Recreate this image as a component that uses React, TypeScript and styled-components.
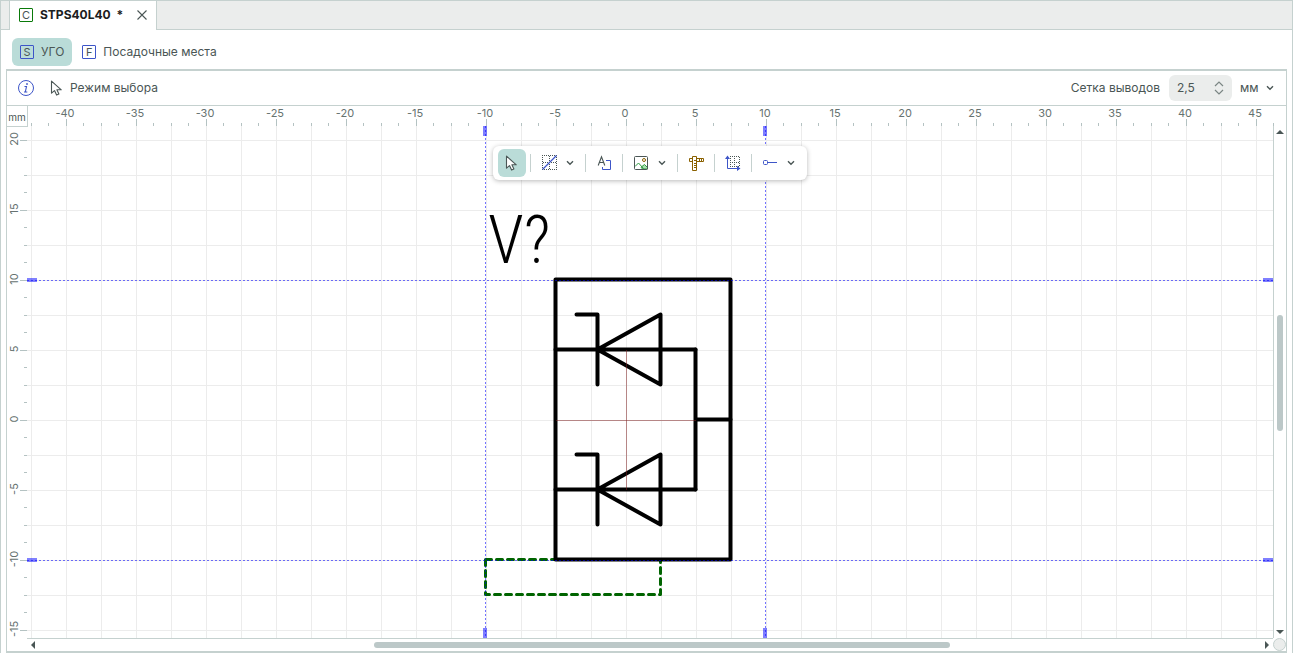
import React, { useLayoutEffect, useRef, useState } from "react";
import styled, { createGlobalStyle, css } from "styled-components";

const line = "#c5d1cf";
const tick = "#b4c2c2";
const ink = "#4a5655";
const teal = "#badcd8";
const blue = "#3d55c8";
const brown = "#8a6100";

const GlobalStyle = createGlobalStyle`
  * { box-sizing: border-box; }
  html, body, #root { height: 100%; }
  body {
    margin: 0;
    background: #fff;
    color: ${ink};
    font: 12px/16px Inter, "Noto Sans", sans-serif;
  }
  button, input, select { font: inherit; color: inherit; }
`;

const Window = styled.main`
  display: flex;
  flex-direction: column;
  height: 100%;
  border: 1px solid ${line};
  border-bottom: 0;
  overflow: hidden;
`;

const TabBar = styled.header`
  display: flex;
  flex: none;
  height: 29px;
  padding-left: 8px;
  background: #ebedec;
  box-shadow: inset 0 -1px ${line};
`;

const DocTab = styled.div`
  display: flex;
  align-items: center;
  gap: 7px;
  padding: 0 8px 2px 9px;
  background: #fff;
  border: solid ${line};
  border-width: 0 1px;
`;

const DocTitle = styled.strong`
  font-weight: 700;
  color: #1b2020;
  white-space: pre;
`;

const BareButton = styled.button`
  display: flex;
  align-items: center;
  justify-content: center;
  padding: 0;
  border: 0;
  background: none;
`;

const CloseButton = styled(BareButton)`
  padding-left: 6px;
`;

const ViewBar = styled.nav`
  display: flex;
  flex: none;
  align-items: center;
  gap: 2px;
  height: 39px;
  padding: 4px 11px 0;
`;

const ViewButton = styled(BareButton)<{ $active?: boolean }>`
  gap: 7px;
  height: 28px;
  padding: 0 8px;
  border-radius: 6px;
  background: ${(p) => (p.$active ? teal : "transparent")};
`;

const Panel = styled.section`
  display: flex;
  flex: 1;
  flex-direction: column;
  min-height: 0;
  margin: 0 5px;
  border: solid ${line};
  border-width: 2px 1px;
`;

const ModeBar = styled.div`
  display: flex;
  flex: none;
  align-items: center;
  height: 35px;
  padding: 0 12px 0 10px;
  border-bottom: 1px solid ${line};
`;

const ModeLabel = styled.span`
  display: flex;
  flex: 1;
  align-items: center;
  gap: 5px;
  margin-left: 14px;
`;

const Stepper = styled.div`
  display: flex;
  align-items: center;
  width: 63px;
  height: 26px;
  margin: 0 8px 0 9px;
  padding: 0 8px;
  border-radius: 6px;
  background: #ebedec;
`;

const StepperInput = styled.input`
  flex: 1;
  min-width: 0;
  padding: 0;
  border: 0;
  outline: 0;
  background: none;
`;

const StepperButtons = styled.div`
  display: flex;
  flex-direction: column;
  gap: 2px;
`;

const UnitField = styled.div`
  display: grid;
  align-items: center;
  width: 34px;

  & > * { grid-area: 1 / 1; }
  & > svg { justify-self: end; pointer-events: none; }
`;

const UnitSelect = styled.select`
  width: 100%;
  padding: 0;
  border: 0;
  outline: 0;
  background: none;
  appearance: none;
`;

const Workspace = styled.div`
  display: grid;
  flex: 1;
  grid-template: 20px minmax(0, 1fr) 13px / 20px minmax(0, 1fr) 13px;
  min-height: 0;
`;

const RulerCorner = styled.div`
  display: flex;
  align-items: center;
  justify-content: center;
  padding-top: 2px;
  box-shadow: 1px 0 ${line}, 0 1px ${line}, 1px 1px ${line};
  font-size: 10px;
  line-height: 12px;
  z-index: 1;
`;

const Drawing = styled.svg`
  display: block;
  width: 100%;
  height: 100%;
  overflow: hidden;
`;

const Ruler = styled.div<{ $wide?: boolean }>`
  min-width: 0;
  min-height: 0;
  overflow: hidden;
  ${(p) => p.$wide && css`grid-column: span 2;`}

  text {
    font-size: 11px;
    fill: #667270;
    text-anchor: middle;
  }
`;

const Sheet = styled.div`
  position: relative;
  min-width: 0;
  min-height: 0;
  overflow: hidden;
`;

const Designator = styled.text`
  font-family: "Roboto Condensed", "Open Sans Condensed", "Open Sans", sans-serif;
  font-size: 66px;
  font-weight: 300;
  fill: #000;
`;

const ToolPalette = styled.div`
  position: absolute;
  top: 20px;
  left: 466px;
  display: flex;
  align-items: center;
  height: 34px;
  padding: 0 5px;
  border-radius: 6px;
  background: #fff;
  box-shadow: 0 1px 5px rgba(0, 0, 0, 0.28);
`;

const Tool = styled(BareButton)<{ $active?: boolean; $menu?: boolean }>`
  gap: 8px;
  width: ${(p) => (p.$menu ? 46 : 28)}px;
  height: 28px;
  border-radius: 6px;
  background: ${(p) => (p.$active ? teal : "transparent")};
`;

const ToolDivider = styled.span`
  width: 1px;
  height: 18px;
  margin: 0 4px;
  background: ${line};
`;

const ScrollTrack = styled.div<{ $vertical?: boolean }>`
  display: flex;
  flex-direction: ${(p) => (p.$vertical ? "column" : "row")};
  align-items: center;
  min-width: 0;
  min-height: 0;
  padding: ${(p) => (p.$vertical ? "4px 0" : "0 4px")};
  border: 0 solid ${line};
  ${(p) => (p.$vertical ? "border-left-width: 1px" : "border-top-width: 1px; grid-column: 1 / 3; margin-left: 20px")};
`;

const ScrollSpace = styled.span<{ $grow: number }>`
  flex: ${(p) => p.$grow} 1 0;
`;

const ScrollThumb = styled.span<{ $grow: number; $vertical?: boolean }>`
  flex: ${(p) => p.$grow} 1 0;
  ${(p) => (p.$vertical ? "width: 6px" : "height: 6px")};
  border-radius: 3px;
  background: #bcc8c8;
`;

const ScrollCorner = styled.div`
  width: 13px;
  height: 13px;
  border: 1px solid ${line};
  border-radius: 50%;
  background: #ebedec;
`;

const LetterBox = styled.span<{ $color: string }>`
  display: flex;
  align-items: center;
  justify-content: center;
  width: 14px;
  height: 14px;
  border: 1px solid ${(p) => p.$color};
  border-radius: 1px;
  font-size: 11px;
  line-height: 12px;
`;

const Chevron = () => (
  <svg width="8" height="6" viewBox="0 0 8 6" fill="none" stroke={ink} strokeWidth="1.4">
    <path d="M1 1.2 4 4.2 7 1.2" />
  </svg>
);

const Arrow = ({ d, w, h }: { d: string; w: number; h: number }) => (
  <svg width={w} height={h} viewBox={`0 0 ${w} ${h}`} fill={ink}>
    <path d={d} />
  </svg>
);

const Pointer = () => (
  <svg width="16" height="16" viewBox="0 0 16 16" fill="#fff" stroke={ink} strokeWidth="1.1" strokeLinejoin="round">
    <path d="M2.500 1.200v12l3-2.600 2.100 4.500 2.300-1.100-2-4.200h4.400z" />
  </svg>
);

const ICON = { width: 16, height: 16, viewBox: "0 0 16 16", fill: "none" };

const LineIcon = () => (
  <svg {...ICON}>
    <path
      d="M0 .5h15M0 14.5h15M.5 2v12M14.5 2v12M1 7.5h14M7.5 1v14"
      stroke={ink}
      strokeDasharray="1 1"
    />
    <path d="M.5 14.500 14.500.500" stroke={blue} strokeWidth="1.300" />
  </svg>
);

const TextIcon = () => (
  <svg {...ICON}>
    <path d="M2.200 10.500 5.500 1.700 8.800 10.500M3.400 7.500h4.200" stroke={ink} strokeWidth="1.100" />
    <path d="M10 5.500h4.500v9h-8V12" stroke={blue} />
  </svg>
);

const PictureIcon = () => (
  <svg {...ICON}>
    <path d="M7 12.200 10.500 9.500 13.500 12.500V14H8.500z" fill="#a9dfb0" stroke="#2c9a3f" />
    <path d="M1 11.500 4.500 8 9.500 13.500" stroke="#2c9a3f" />
    <rect x=".5" y="1.500" width="13" height="13" rx="1" stroke={ink} />
    <circle cx="10" cy="5" r="1.500" stroke={brown} />
  </svg>
);

const MeasureIcon = () => (
  <svg {...ICON} stroke={brown}>
    <path d="M4.500 1.500h4v14h-4zM4.500 3.500h-3v3h3M8.500 3.500h7v3h-7" />
    <path d="M11.500 4v2M13.500 4v2M6 5.500h2M6 8.500h2M6 10.500h2M6 12.500h2" />
  </svg>
);

const OriginIcon = () => (
  <svg {...ICON}>
    <path
      d="M5 1.500h10M5 11.500h10M5 7.500h10M5.500 3v8M9.500 3v8M14.500 2v9"
      stroke={ink}
      strokeDasharray="1 1"
    />
    <path d="M2.500 3v10.500H13" stroke={blue} />
    <path d="M0 4 2.500.500 5 4zM12 11l3.500 2.500L12 16z" fill={blue} />
  </svg>
);

const PinIcon = () => (
  <svg {...ICON} stroke={blue}>
    <rect x=".5" y="5.500" width="4" height="4" rx="1" />
    <path d="M4.500 7.500H14" />
  </svg>
);

/* Sheet scale: 14 px per millimetre, zero point measured from the sheet's corner. */
const ORIGIN_X = 599;
const ORIGIN_Y = 294;
const PX_PER_MM = 14;
const TICK_STEP = 17.5;

/* Ticks that fit a ruler of the given length; every fourth one carries a label. */
function ticksFor(origin: number, length: number) {
  const ticks: { n: number; at: number; major: boolean; label: boolean }[] = [];
  for (let n = Math.ceil(-origin / TICK_STEP); origin + n * TICK_STEP < length; n++) {
    const at = origin + Math.floor(n * TICK_STEP);
    const major = n % 4 === 0;
    ticks.push({ n, at, major, label: major && at > 9 && at < length - 6 });
  }
  return ticks;
}

function useSize() {
  const ref = useRef<HTMLDivElement>(null);
  const [size, setSize] = useState({ width: 0, height: 0 });
  useLayoutEffect(() => {
    const el = ref.current!;
    const measure = () => setSize({ width: el.clientWidth, height: el.clientHeight });
    measure();
    const observer = new ResizeObserver(measure);
    observer.observe(el);
    return () => observer.disconnect();
  }, []);
  return [ref, size] as const;
}

const HorizontalRuler = () => {
  const [ref, { width }] = useSize();
  return (
    <Ruler $wide ref={ref}>
      <Drawing>
        {ticksFor(ORIGIN_X, width).map(({ n, at, major, label }) => (
          <g key={n}>
            <rect x={at} y={major ? 13 : 17} width="1" height={major ? 7 : 3} fill={tick} />
            {label && <text x={at - 1} y="11">{(n / 4) * 5}</text>}
          </g>
        ))}
      </Drawing>
    </Ruler>
  );
};

const VerticalRuler = () => {
  const [ref, { height }] = useSize();
  return (
    <Ruler ref={ref}>
      <Drawing>
        {ticksFor(ORIGIN_Y, height).map(({ n, at, major, label }) => (
          <g key={n}>
            <rect x={major ? 13 : 17} y={at} width={major ? 7 : 3} height="1" fill={tick} />
            {label && (
              <text transform={`translate(11 ${at - 1}) rotate(-90)`}>{(-n / 4) * 5 || 0}</text>
            )}
          </g>
        ))}
      </Drawing>
    </Ruler>
  );
};

const Diode = ({ y }: { y: number }) => (
  <path d={`M-49 ${y - 35}h21v70M-28 ${y}l63-35v70zM-70 ${y}H70`} />
);

const SymbolDrawing = () => (
  <Drawing>
    <defs>
      <pattern id="grid" x={ORIGIN_X} y={ORIGIN_Y} width="35" height="35" patternUnits="userSpaceOnUse">
        <path d="M0 0h35v1H1v34H0z" fill="#ececec" />
      </pattern>
    </defs>
    <rect width="100%" height="100%" fill="url(#grid)" />

    <g transform={`translate(${ORIGIN_X - 0.5} ${ORIGIN_Y - 0.5})`} fill="none" strokeLinecap="round" strokeLinejoin="round">
      <path d="M-140 140v35H35v-35M-140 140H35" stroke="#006400" strokeWidth="3" strokeDasharray="6 5" />
      <g stroke="#000" strokeWidth="4">
        <rect x={-5 * PX_PER_MM} y={-10 * PX_PER_MM} width={12.5 * PX_PER_MM} height={20 * PX_PER_MM} />
        <Diode y={-70} />
        <Diode y={70} />
        <path d="M70-70V70M70 0h35" />
      </g>
    </g>
    <Designator x="461" y="137">V?</Designator>

    <path
      d={`M${ORIGIN_X - 70} ${ORIGIN_Y + 0.5}h140M${ORIGIN_X + 0.5} ${ORIGIN_Y - 70}v140`}
      stroke="#802020"
      strokeOpacity="0.5"
    />

    <g stroke="#0000ff" strokeOpacity="0.55" strokeDasharray="2 2">
      {[-140, 140].map((d) => (
        <React.Fragment key={d}>
          <line x1="0" x2="100%" y1={ORIGIN_Y + d + 0.5} y2={ORIGIN_Y + d + 0.5} />
          <line y1="0" y2="100%" x1={ORIGIN_X + d - 0.5} x2={ORIGIN_X + d - 0.5} />
        </React.Fragment>
      ))}
    </g>

    <g fill="#0000ff" fillOpacity="0.5">
      {[-140, 140].map((d) => (
        <React.Fragment key={d}>
          <rect x="0" y={ORIGIN_Y + d - 2} width="10" height="4" />
          <rect x={ORIGIN_X + d - 3} y="0" width="4" height="10" />
          <svg x="100%" y={ORIGIN_Y + d - 2} overflow="visible">
            <rect x="-10" width="10" height="4" />
          </svg>
          <svg x={ORIGIN_X + d - 3} y="100%" overflow="visible">
            <rect y="-10" width="4" height="10" />
          </svg>
        </React.Fragment>
      ))}
    </g>
  </Drawing>
);

export default function App() {
  return (
    <>
      <GlobalStyle />
      <Window>
        <TabBar>
          <DocTab>
            <LetterBox $color="#0a7a0a">C</LetterBox>
            <DocTitle>STPS40L40  *</DocTitle>
            <CloseButton aria-label="Закрыть">
              <svg width="12" height="12" viewBox="0 0 12 12" stroke={ink} strokeWidth="1.1">
                <path d="M1.500 1.500l9 9M10.500 1.500l-9 9" />
              </svg>
            </CloseButton>
          </DocTab>
        </TabBar>

        <ViewBar>
          <ViewButton $active>
            <LetterBox $color={blue}>S</LetterBox>
            УГО
          </ViewButton>
          <ViewButton>
            <LetterBox $color={blue}>F</LetterBox>
            Посадочные места
          </ViewButton>
        </ViewBar>

        <Panel>
          <ModeBar>
            <BareButton aria-label="Сведения">
              <svg width="18" height="18" viewBox="0 0 18 18" fill="none" stroke={blue}>
                <circle cx="9" cy="9" r="7.5" />
                <path d="M7.5 7.500h2L8.300 13h2M7 13h1.500" strokeWidth="1.100" />
                <circle cx="10" cy="5" r=".5" fill={blue} />
              </svg>
            </BareButton>
            <ModeLabel>
              <Pointer />
              Режим выбора
            </ModeLabel>
            <label htmlFor="pin-grid">Сетка выводов</label>
            <Stepper>
              <StepperInput id="pin-grid" defaultValue="2,5" />
              <StepperButtons>
                <BareButton aria-label="Больше">
                  <svg width="10" height="6" viewBox="0 0 10 6" fill="none" stroke="#7b8684" strokeWidth="1.200">
                    <path d="M1 5 5 1l4 4" />
                  </svg>
                </BareButton>
                <BareButton aria-label="Меньше">
                  <svg width="10" height="6" viewBox="0 0 10 6" fill="none" stroke="#7b8684" strokeWidth="1.200">
                    <path d="M1 1l4 4 4-4" />
                  </svg>
                </BareButton>
              </StepperButtons>
            </Stepper>
            <UnitField>
              <UnitSelect aria-label="Единицы">
                <option>мм</option>
              </UnitSelect>
              <Chevron />
            </UnitField>
          </ModeBar>

          <Workspace>
            <RulerCorner>mm</RulerCorner>
            <HorizontalRuler />
            <VerticalRuler />
            <Sheet>
              <SymbolDrawing />
              <ToolPalette role="toolbar">
                <Tool $active aria-label="Выбор"><Pointer /></Tool>
                <ToolDivider />
                <Tool $menu aria-label="Линия"><LineIcon /><Chevron /></Tool>
                <ToolDivider />
                <Tool aria-label="Текст"><TextIcon /></Tool>
                <ToolDivider />
                <Tool $menu aria-label="Изображение"><PictureIcon /><Chevron /></Tool>
                <ToolDivider />
                <Tool aria-label="Измерение"><MeasureIcon /></Tool>
                <ToolDivider />
                <Tool aria-label="Начало координат"><OriginIcon /></Tool>
                <ToolDivider />
                <Tool $menu aria-label="Вывод"><PinIcon /><Chevron /></Tool>
              </ToolPalette>
            </Sheet>
            <ScrollTrack $vertical>
              <Arrow w={8} h={4} d="M0 4 4 0l4 4z" />
              <ScrollSpace $grow={181} />
              <ScrollThumb $vertical $grow={116} />
              <ScrollSpace $grow={199} />
              <Arrow w={8} h={4} d="M0 0h8L4 4z" />
            </ScrollTrack>
            <ScrollTrack>
              <Arrow w={4} h={8} d="M4 0v8L0 4z" />
              <ScrollSpace $grow={339} />
              <ScrollThumb $grow={576} />
              <ScrollSpace $grow={315} />
              <Arrow w={4} h={8} d="M0 0v8l4-4z" />
            </ScrollTrack>
            <ScrollCorner />
          </Workspace>
        </Panel>
      </Window>
    </>
  );
}
